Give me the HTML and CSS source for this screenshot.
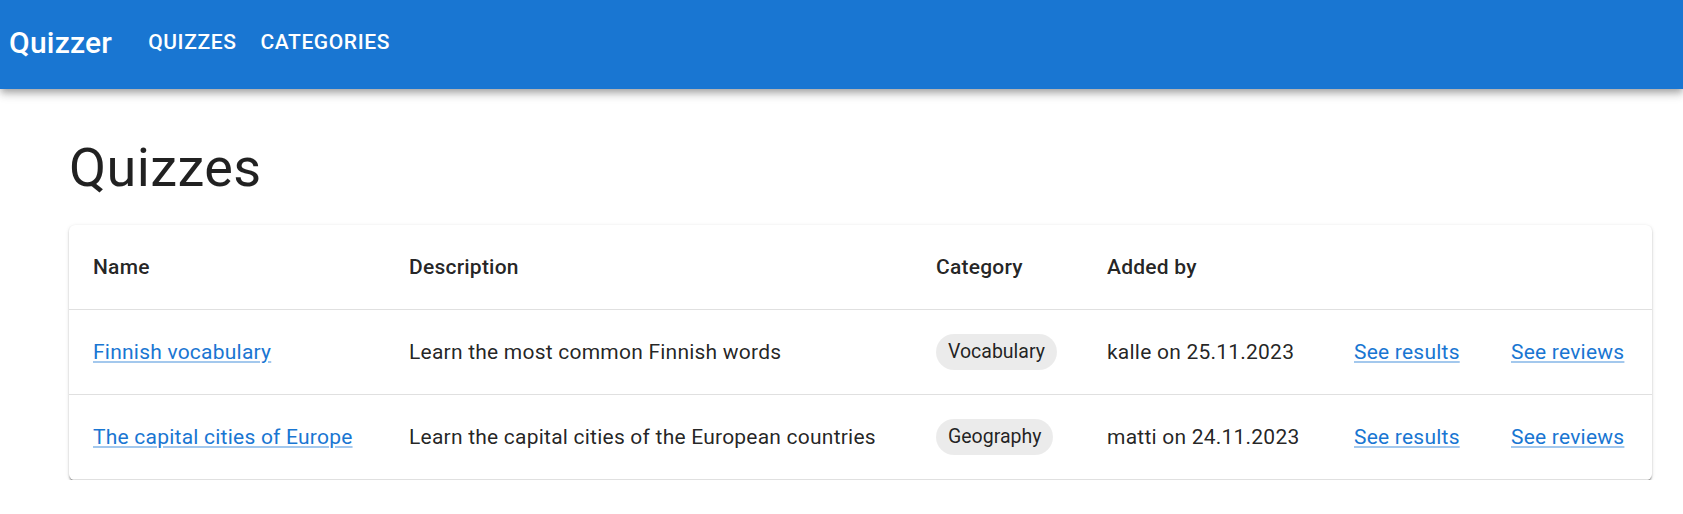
FILE: index.html
```html
<!DOCTYPE html>
<html lang="en">
<head>
<meta charset="utf-8">
<title>Quizzer</title>
<link rel="stylesheet" href="styles.css">
</head>
<body>
<header class="appbar">
  <div class="toolbar">
    <span class="brand">Quizzer</span>
    <nav class="nav">
      <a class="nav-btn" href="#">Quizzes</a>
      <a class="nav-btn" href="#">Categories</a>
    </nav>
  </div>
</header>
<main class="container">
  <h1 class="title">Quizzes</h1>
  <div class="card">
    <table class="quiz-table">
      <colgroup>
        <col class="c-name">
        <col class="c-desc">
        <col class="c-cat">
        <col class="c-added">
        <col class="c-res">
        <col class="c-rev">
      </colgroup>
      <thead>
        <tr>
          <th>Name</th>
          <th>Description</th>
          <th>Category</th>
          <th>Added by</th>
          <th></th>
          <th></th>
        </tr>
      </thead>
      <tbody>
        <tr>
          <td><a class="link" href="#">Finnish vocabulary</a></td>
          <td>Learn the most common Finnish words</td>
          <td><span class="chip">Vocabulary</span></td>
          <td>kalle on 25.11.2023</td>
          <td><a class="link" href="#">See results</a></td>
          <td><a class="link" href="#">See reviews</a></td>
        </tr>
        <tr>
          <td><a class="link" href="#">The capital cities of Europe</a></td>
          <td>Learn the capital cities of the European countries</td>
          <td><span class="chip">Geography</span></td>
          <td>matti on 24.11.2023</td>
          <td><a class="link" href="#">See results</a></td>
          <td><a class="link" href="#">See reviews</a></td>
        </tr>
      </tbody>
    </table>
  </div>
</main>
</body>
</html>
```

FILE: styles.css
```css
* { box-sizing: border-box; }

html, body {
  margin: 0;
  padding: 0;
  background: #ffffff;
  font-family: Roboto, "Liberation Sans", Arial, sans-serif;
  color: rgba(0, 0, 0, 0.87);
}

.appbar {
  background: #1976d2;
  color: #ffffff;
  box-shadow: 0px 3px 6px -1.5px rgba(0,0,0,0.2), 0px 6px 7.5px 0px rgba(0,0,0,0.14), 0px 1.5px 15px 0px rgba(0,0,0,0.12);
  position: relative;
  z-index: 2;
}

.toolbar {
  height: 89px;
  display: flex;
  align-items: center;
  padding: 0 0 4px 9px;
}

.brand {
  font-size: 30px;
  font-weight: 500;
  line-height: 1.6;
  letter-spacing: 0.0075em;
  margin-right: 24px;
}

.nav {
  display: flex;
}

.nav-btn {
  color: #ffffff;
  text-decoration: none;
  text-transform: uppercase;
  font-size: 21px;
  font-weight: 500;
  letter-spacing: 0.02857em;
  line-height: 1.75;
  padding: 9px 12px;
}

.container {
  padding: 0 31px 0 69px;
}

.title {
  margin: 46px 0 23px 0;
  font-size: 54px;
  font-weight: 400;
  line-height: 1.235;
  letter-spacing: 0.00735em;
}

.card {
  background: #fff;
  border-radius: 6px;
  box-shadow: 0px 3px 2px -1px rgba(0,0,0,0.3), 0px 1.5px 2px 0px rgba(0,0,0,0.16), 0px 1px 4.5px 0px rgba(0,0,0,0.1);
  overflow: hidden;
}

.quiz-table {
  width: 100%;
  border-collapse: collapse;
  table-layout: fixed;
}

.c-name { width: 316px; }
.c-desc { width: 527px; }
.c-cat { width: 171px; }
.c-added { width: 247px; }
.c-res { width: 157px; }
.c-rev { width: auto; }

.quiz-table th,
.quiz-table td {
  text-align: left;
  padding: 24px;
  border-bottom: 1px solid #e0e0e0;
  font-size: 21px;
  letter-spacing: 0.01071em;
  vertical-align: middle;
  white-space: nowrap;
  line-height: 36px;
}

.quiz-table th {
  font-weight: 500;
}

.quiz-table td {
  font-weight: 400;
}

.link {
  color: #1976d2;
  text-decoration: underline;
  text-decoration-color: rgba(25, 118, 210, 0.4);
}

.chip {
  display: inline-flex;
  align-items: center;
  height: 36px;
  padding: 0 12px;
  border-radius: 18px;
  background: rgba(0, 0, 0, 0.08);
  font-size: 19.5px;
  letter-spacing: 0;
  vertical-align: top;
}
```
